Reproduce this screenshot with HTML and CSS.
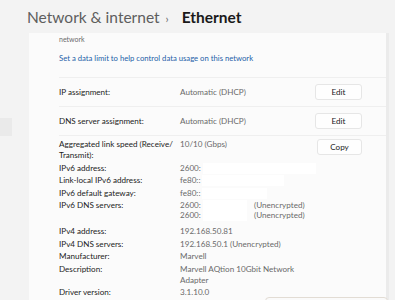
FILE: index.html
```html
<!DOCTYPE html>
<html>
<head>
<meta charset="utf-8">
<link rel="stylesheet" href="styles.css">
</head>
<body>
<header class="header">
  <span class="crumb">Network &amp; internet</span>
  <span class="chev">›</span>
  <span class="current">Ethernet</span>
</header>
<div class="main">
  <aside class="side"><div class="side-item"></div></aside>
  <section class="card">
    <div class="usage">
      <div class="note">network</div>
      <a class="link">Set a data limit to help control data usage on this network</a>
    </div>
    <div class="setting">
      <span class="label">IP assignment:</span>
      <span class="value">Automatic (DHCP)</span>
      <button class="btn">Edit</button>
    </div>
    <div class="setting">
      <span class="label">DNS server assignment:</span>
      <span class="value">Automatic (DHCP)</span>
      <button class="btn">Edit</button>
    </div>
    <div class="info">
      <div class="props">
        <span class="label">Aggregated link speed (Receive/ Transmit):</span>
        <span class="value">10/10 (Gbps)</span>
        <span class="label">IPv6 address:</span>
        <span class="value">2600:<i class="redact r1"></i></span>
        <span class="label">Link-local IPv6 address:</span>
        <span class="value">fe80::<i class="redact r2"></i></span>
        <span class="label">IPv6 default gateway:</span>
        <span class="value">fe80::<i class="redact r3"></i></span>
        <span class="label">IPv6 DNS servers:</span>
        <span class="value dnslist"><span class="dns"><span class="addr">2600:<i class="redact r4"></i></span>(Unencrypted)</span><span class="dns"><span class="addr">2600:<i class="redact r4"></i></span>(Unencrypted)</span></span>
        <span class="label">IPv4 address:</span>
        <span class="value">192.168.50.81</span>
        <span class="label">IPv4 DNS servers:</span>
        <span class="value">192.168.50.1 (Unencrypted)</span>
        <span class="label">Manufacturer:</span>
        <span class="value">Marvell</span>
        <span class="label">Description:</span>
        <span class="value">Marvell AQtion 10Gbit Network Adapter</span>
        <span class="label">Driver version:</span>
        <span class="value">3.1.10.0</span>
      </div>
      <button class="btn copy">Copy</button>
    </div>
  </section>
  <div class="scroll"></div>
</div>
<div class="popup"></div>
</body>
</html>
```
FILE: styles.css
```css
* { box-sizing: border-box; }
html, body { margin: 0; padding: 0; }
body {
  background: #f3f3f3;
  font-family: "Lato", "Open Sans", sans-serif;
  color: #1b1b1b;
  width: 395px;
  height: 300px;
  overflow: hidden;
  position: relative;
}
.header {
  height: 33px;
  padding: 5px 0 0 27px;
  display: flex;
  align-items: baseline;
  font-size: 15.5px;
  line-height: 24px;
}
.crumb { color: #5e5e5e; }
.chev { color: #666; font-size: 11px; margin: 0 13px 0 6px; }
.current { font-weight: 700; color: #1a1a1a; }
.main { display: flex; }
.side { width: 29px; padding-top: 85px; }
.side-item { width: 12px; height: 18px; background: #eaeaea; }
.card {
  width: 357px;
  background: #fbfbfb;
  font-size: 8.1px;
  padding-left: 30px;
}
.scroll { width: 3px; background: #ebebeb; height: 267px; }
.usage { height: 44px; padding-top: 1px; }
.note { color: #6b6b6b; font-size: 7px; line-height: 10px; }
.link { display: block; color: #1e5fa8; margin-top: 9px; line-height: 11px; font-size: 7.7px; }
.setting {
  display: flex;
  align-items: center;
  height: 29px;
  border-top: 1px solid #efefef;
}
.setting .label { width: 121px; }
.setting .value { flex: 1; color: #6a6a6a; }
.btn {
  width: 47px;
  height: 16px;
  margin-right: 24px;
  background: #fefefe;
  border: 1px solid #e6e6e6;
  border-radius: 3px;
  font: inherit;
  font-size: 8.1px;
  color: #222;
  padding: 0;
}
.info {
  display: flex;
  align-items: flex-start;
  border-top: 1px solid #efefef;
  padding-top: 3px;
}
.props {
  display: grid;
  grid-template-columns: 121px 137px;
  row-gap: 1.6px;
  line-height: 11px;
}
.props .label { padding-right: 4px; }
.props .value { color: #6a6a6a; }
.dnslist { margin-bottom: 3px; }
.redact {
  display: inline-block;
  height: 11px;
  vertical-align: top;
  background: #ffffff;
  margin-left: 2px;
}
.r1 { width: 113px; }
.r2 { width: 82px; }
.r3 { width: 65px; }
.r4 { width: 44px; }
.dns { display: block; white-space: nowrap; }
.dns + .dns { margin-top: -1px; }
.addr { display: inline-block; width: 74px; }
.popup {
  position: absolute;
  left: 265px;
  top: 297px;
  width: 123px;
  height: 20px;
  border: 1px solid #e2dcd4;
  border-radius: 4px;
  background: #fafafa;
}
```
